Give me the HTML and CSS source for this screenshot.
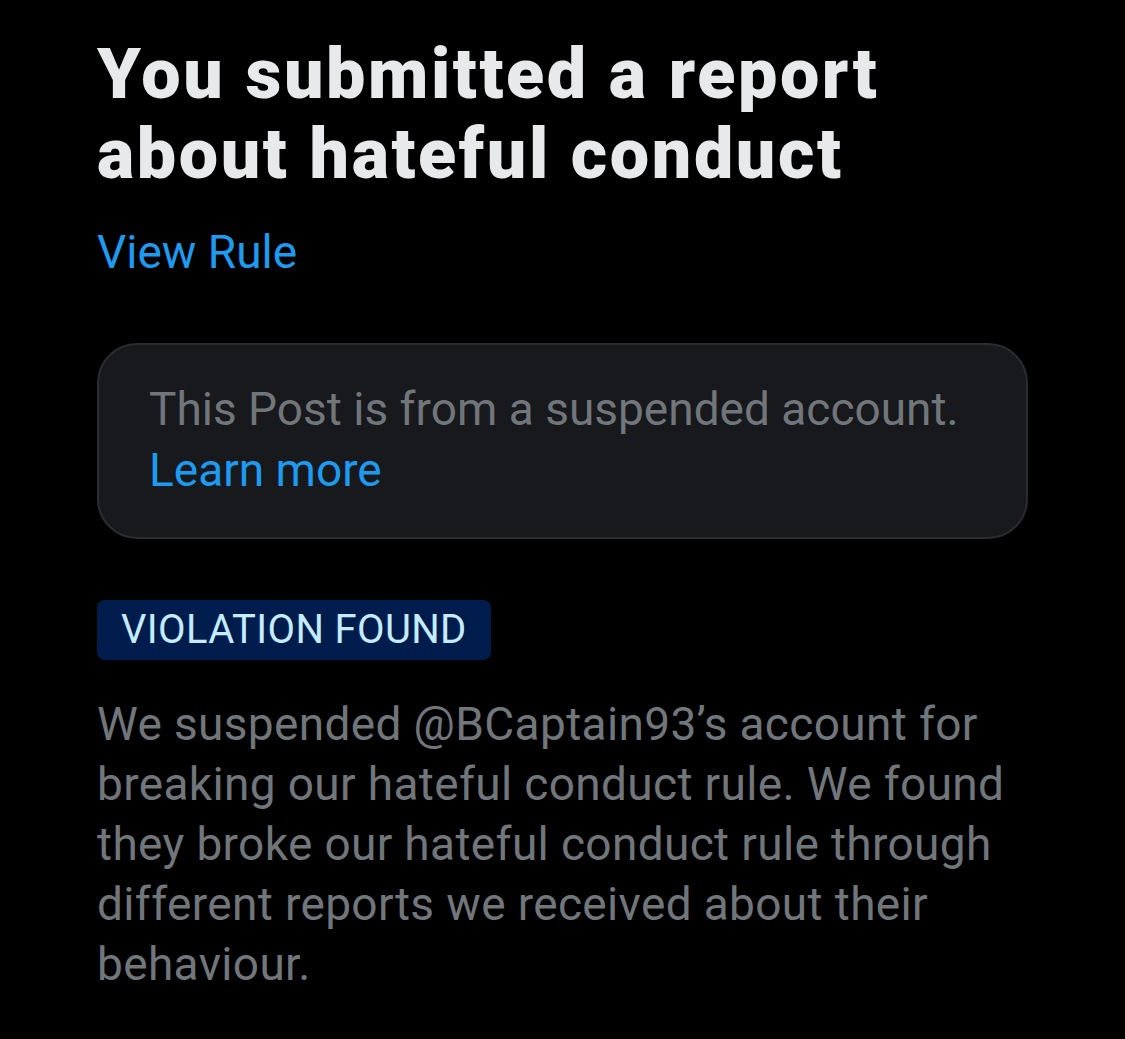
FILE: index.html
```html
<!DOCTYPE html>
<html lang="en">
<head>
<meta charset="utf-8">
<link rel="stylesheet" href="styles.css">
</head>
<body>
<main class="page">
  <h1 class="title">You submitted a report about hateful conduct</h1>
  <a class="link view-rule" href="#">View Rule</a>
  <div class="notice">
    <p class="notice-text">This Post is from a suspended account.</p>
    <a class="link learn" href="#">Learn more</a>
  </div>
  <div class="badge">VIOLATION FOUND</div>
  <p class="body-text">We suspended @BCaptain93’s account for breaking our hateful conduct rule. We found they broke our hateful conduct rule through different reports we received about their behaviour.</p>
</main>
</body>
</html>
```
FILE: styles.css
```css
html, body {
  margin: 0;
  padding: 0;
  background: #000;
}
body {
  width: 1125px;
  height: 1039px;
  overflow: hidden;
  font-family: Roboto, "Liberation Sans", sans-serif;
}
.page {
  padding: 34px 0 0 97px;
  width: 931px;
  display: flex;
  flex-direction: column;
  align-items: flex-start;
}
.title {
  margin: 0;
  color: #e7e9ea;
  font-size: 70px;
  line-height: 80px;
  font-weight: 900;
  letter-spacing: 2.6px;
  width: 900px;
}
.link {
  color: #1d9bf0;
  text-decoration: none;
}
.view-rule {
  margin-top: 30px;
  font-size: 46px;
  line-height: 56px;
}
.notice {
  margin-top: 63px;
  box-sizing: border-box;
  width: 931px;
  height: 196px;
  border: 2px solid #2a2c30;
  border-radius: 40px;
  background: #18191d;
  padding: 34px 50px;
  display: flex;
  flex-direction: column;
  align-items: flex-start;
}
.notice-text {
  margin: 0;
  color: #71767b;
  font-size: 46px;
  line-height: 61px;
}
.learn {
  font-size: 46px;
  line-height: 61px;
}
.badge {
  margin-top: 61px;
  background: #001c4d;
  color: #c5ebff;
  font-size: 40px;
  line-height: 60px;
  letter-spacing: 0.35px;
  padding: 0 24px;
  border-radius: 8px;
}
.body-text {
  margin: 34px 0 0;
  color: #71767b;
  font-size: 46px;
  line-height: 60px;
  letter-spacing: 0.35px;
  width: 940px;
}
```
